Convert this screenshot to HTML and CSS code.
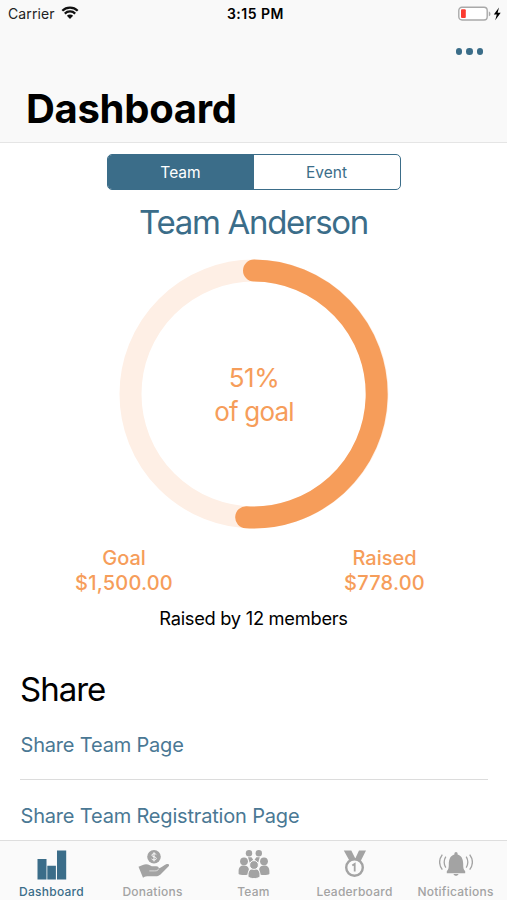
FILE: index.html
```html
<!DOCTYPE html>
<html lang="en">
<head>
<meta charset="utf-8">
<title>Dashboard</title>
<link rel="stylesheet" href="styles.css">
</head>
<body>
<div class="app">
  <header class="header">
    <div class="status">
      <div class="carrier"><span>Carrier</span>
        <svg width="18" height="14" viewBox="0 0 18 14"><path d="M1.3 4.8a11 11 0 0 1 15.4 0M3.8 7.6a7.4 7.4 0 0 1 10.4 0" fill="none" stroke="#111" stroke-width="2.2"/><path d="M5.9 9.8a4.4 4.4 0 0 1 6.2 0L9 13z" fill="#111"/></svg>
      </div>
      <div class="time">3:15 PM</div>
      <div class="power">
        <svg width="44" height="16" viewBox="0 0 44 16"><rect x=".8" y="1.2" width="28.4" height="12.8" rx="3.2" fill="#fff" stroke="#a9a9a9" stroke-width="1.4"/><rect x="3" y="3.3" width="4.8" height="8.8" rx="1" fill="#fb3a30"/><path d="M30.8 5.4c2.2.6 2.2 4.2 0 4.8z" fill="#a9a9a9"/><path d="M41 1.5L35.8 8.6h3l-1.6 5.6 5.5-7.4h-3.1z" fill="#000"/></svg>
      </div>
    </div>
    <div class="more"><i></i><i></i><i></i></div>
    <h1>Dashboard</h1>
  </header>
  <main class="content">
    <div class="segments"><div class="segment active">Team</div><div class="segment">Event</div></div>
    <h2 class="team-name">Team Anderson</h2>
    <div class="ring">
      <svg class="ring-art" width="270" height="270" viewBox="0 0 270 270"><circle cx="135" cy="135" r="123.5" fill="none" stroke="#feefe5" stroke-width="22"/><path d="M135 11.5A123.5 123.5 0 1 1 127.2 258.3" fill="none" stroke="#f69d5a" stroke-width="22" stroke-linecap="round"/></svg>
      <div class="ring-label"><span class="percent">51%</span><span class="of-goal">of goal</span></div>
    </div>
    <div class="totals">
      <div class="total"><span>Goal</span><span class="sum">$1,500.00</span></div>
      <div class="total"><span>Raised</span><span class="sum">$778.00</span></div>
    </div>
    <p class="members">Raised by 12 members</p>
    <section class="share">
      <h2>Share</h2>
      <a class="link">Share Team Page</a>
      <a class="link">Share Team Registration Page</a>
    </section>
  </main>
  <nav class="tabs">
    <div class="tab selected">
      <svg width="32" height="32" viewBox="0 0 32 32"><path d="M1.500 10h9v20.500h-9zM11.300 16.800h8.600v13.700h-8.600zM21 1.500h9.200v29H21z" fill="#3b6d89"/></svg>
      <span>Dashboard</span>
    </div>
    <div class="tab">
      <svg width="32" height="32" viewBox="0 0 32 32"><circle cx="17" cy="7.8" r="6.8" fill="#a3a3a3"/><path d="M19.3 5.6c-.8-1.3-4.4-1.3-4.4.6 0 2.2 4.4 1 4.4 3.3 0 1.8-3.7 2-4.7.4M17 3.2v9.2" fill="none" stroke="#fafafa" stroke-width="1"/><path d="M1.500 17.800l4.300-1.800c2.500-1.200 4.900-1 7 .3l2 .9h4.500c2 0 2.600 1 2.300 2.200 3.200-.7 5.400-3.200 8.100-4.300 1.800-.7 3.200.5 2.200 1.800l-8.400 8.500c-1.600 1.400-3.200 1.800-5 1.800H10.200c-2.300 0-2.900.8-4.200 1.600z" fill="#a3a3a3"/><path d="M12.300 21.900h5.400c2.300 0 3.200-.5 3.900-2" fill="none" stroke="#e8e8e8" stroke-width=".8"/></svg>
      <span>Donations</span>
    </div>
    <div class="tab">
      <svg width="32" height="32" viewBox="0 0 32 32"><g fill="#a3a3a3"><circle cx="11" cy="4.2" r="3.2"/><circle cx="20.8" cy="4.2" r="3.2"/><path d="M10 8.3h3.500l1.700 2.500-3.500 3zM21.800 8.300h-3.500l-1.700 2.500 3.500 3z"/></g><g fill="#a3a3a3"><path d="M.6 25v-2.500c0-4.300 1.900-6 5.300-6 2.500 0 4.300 1 5 3.500L9.600 25.800C5.500 26.200 2 26 .6 25zM31.400 25v-2.500c0-4.300-1.900-6-5.300-6-2.500 0-4.300 1-5 3.500l1.300 5.800c4.100.4 7.600.2 9-.8z"/><circle cx="6" cy="12.300" r="3.900"/><circle cx="26" cy="12.300" r="3.900"/></g><g fill="#a3a3a3" stroke="#fafafa" stroke-width="1"><path d="M10 27.800V26c0-4.300 2.100-6.300 6-6.300s6 2 6 6.300v1.800c-2.500 2.400-9.500 2.400-12 0z"/><circle cx="16" cy="16" r="4.400"/></g></svg>
      <span>Team</span>
    </div>
    <div class="tab">
      <svg width="32" height="32" viewBox="0 0 32 32"><path d="M4.800 1.500h7.500l4 8 3.700-8h7L20.700 14h-9z" fill="#a3a3a3"/><circle cx="15.500" cy="18.500" r="8.300" fill="#fafafa" stroke="#a3a3a3" stroke-width="2.400"/><path d="M13.300 16.600l2.400-1.700v7.500" fill="none" stroke="#a3a3a3" stroke-width="1.800"/></svg>
      <span>Leaderboard</span>
    </div>
    <div class="tab">
      <svg width="34" height="32" viewBox="0 0 34 32"><path d="M7.800 22.300c1.900-1.700 2-3.700 2-7.200 0-5.500 2-8.600 5.600-9.600v-.9a1.600 1.600 0 0 1 3.200 0v.9c3.600 1 5.600 4.100 5.600 9.600 0 3.500.1 5.500 2 7.200v1.900H7.800zM14.500 24.900h5c-.4 2.400-4.600 2.400-5 0z" fill="#a3a3a3"/><path d="M6.800 7.700c-2 3.400-2 7.600 0 11M3.300 5.700c-3.300 4.600-3.300 10.400 0 15M27.200 7.700c2 3.400 2 7.600 0 11M30.700 5.700c3.300 4.600 3.300 10.400 0 15" fill="none" stroke="#a3a3a3" stroke-width="1.300"/></svg>
      <span>Notifications</span>
    </div>
  </nav>
</div>
</body>
</html>
```
FILE: styles.css
```css
* { box-sizing: border-box; }
body { margin: 0; font-family: Inter, "Liberation Sans", sans-serif; background: #fff; color: #000; }
h1, h2, p { margin: 0; }
svg { display: block; flex: none; }
.app { width: 507px; height: 900px; display: flex; flex-direction: column; overflow: hidden; }
.header { flex: none; height: 143px; background: #f9f9f9; border-bottom: 1px solid #e5e5e5; display: flex; flex-direction: column; }
.status { height: 27px; padding: 0 5px 0 8px; display: grid; grid-template-columns: 1fr auto 1fr; align-items: center; font-size: 14px; }
.carrier { display: flex; align-items: center; gap: 6.5px; color: #222; letter-spacing: 0.1px; }
.carrier svg { margin-top: -1px; }
.time { font-weight: 600; letter-spacing: 0.5px; padding-left: 1px; }
.power { display: flex; justify-content: flex-end; }
.more { display: flex; justify-content: flex-end; gap: 4px; padding: 21px 24px 0 0; height: 51px; }
.more i { width: 6.5px; height: 6.5px; border-radius: 50%; background: #3b6d89; }
h1 { font-size: 40px; line-height: 50px; font-weight: 700; letter-spacing: -0.3px; padding: 6px 0 0 26px; }
.content { flex: 1; min-height: 0; overflow: hidden; display: flex; flex-direction: column; align-items: center; padding-top: 11px; }
.segments { flex: none; width: 294px; height: 36px; border: 1.5px solid #3b6d89; border-radius: 5px; display: flex; overflow: hidden; font-size: 15.5px; color: #3b6d89; }
.segment { flex: 1; display: flex; align-items: center; justify-content: center; }
.segment.active { background: #3b6d89; color: #fff; }
.team-name { font-size: 33px; line-height: 40px; font-weight: 400; letter-spacing: -1.3px; color: #3b6d89; margin-top: 12px; }
.ring { flex: none; width: 270px; height: 270px; margin: 17px 0 0 1px; display: grid; }
.ring-art, .ring-label { grid-area: 1 / 1; }
.ring-label { display: flex; flex-direction: column; align-items: center; justify-content: center; padding-top: 1px; font-size: 26px; line-height: 34px; font-weight: 400; letter-spacing: -0.8px; color: #f69d5a; }
.percent { letter-spacing: -0.4px; }
.totals { width: 100%; display: grid; grid-template-columns: 248px 273px; margin-top: 17px; color: #f69d5a; font-size: 20px; line-height: 25px; font-weight: 500; }
.total { display: flex; flex-direction: column; align-items: center; }
.sum { letter-spacing: 0.2px; }
.members { font-size: 18.3px; line-height: 24px; letter-spacing: -0.28px; margin-top: 10px; }
.share { width: 100%; padding: 0 19px 0 20px; margin-top: 39px; }
.share h2 { font-size: 33px; line-height: 40px; font-weight: 400; letter-spacing: -1px; }
.link { display: flex; align-items: center; height: 71px; padding: 2px 0 0 0.5px; font-size: 20px; letter-spacing: -0.18px; color: #4a7894; border-bottom: 1px solid #dcdcdc; }
.tabs { flex: none; height: 60px; background: #fafafa; border-top: 1px solid #dedede; display: grid; grid-template-columns: repeat(5, 101px); padding-left: 1px; font-size: 12px; font-weight: 500; letter-spacing: 0.25px; color: #a3a3a3; }
.tab { display: flex; flex-direction: column; align-items: center; padding-top: 8px; }
.tab span { line-height: 15px; margin-top: 3px; }
.selected { color: #3b6d89; }
```
